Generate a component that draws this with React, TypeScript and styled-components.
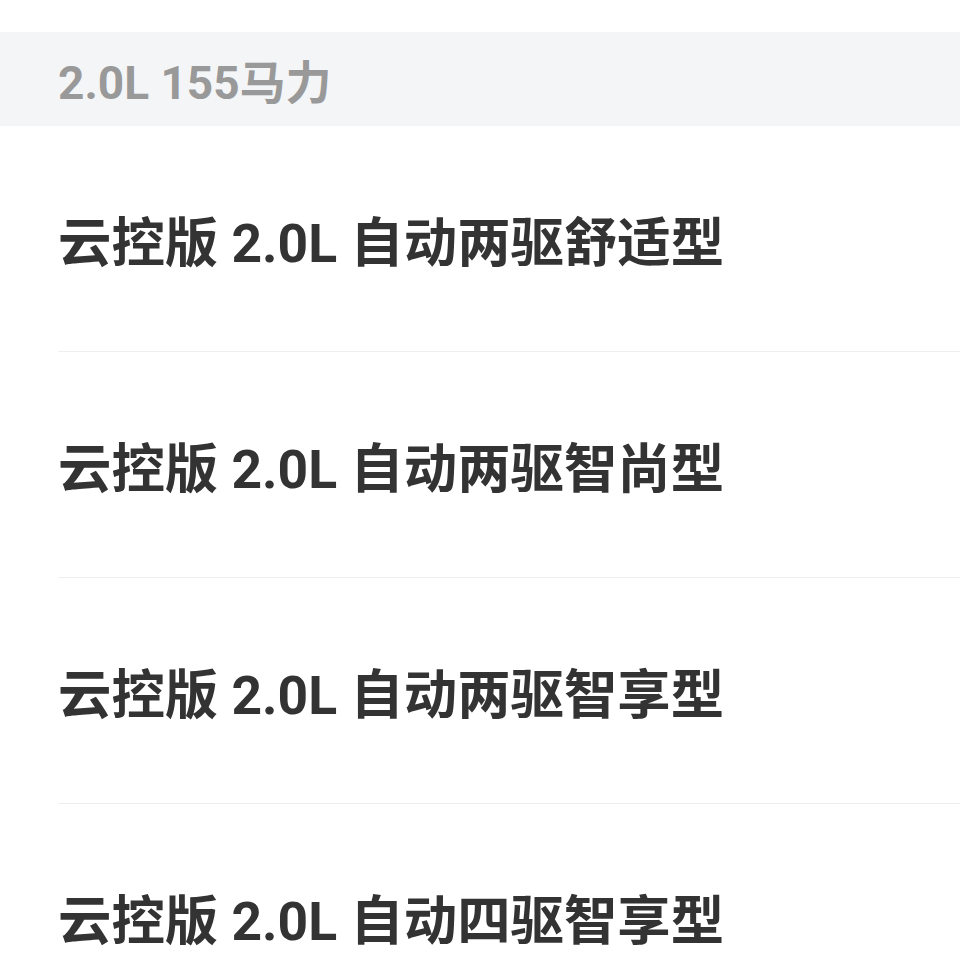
import React from "react";
import styled, { createGlobalStyle } from "styled-components";

const GlobalStyle = createGlobalStyle`
  html, body {
    margin: 0;
    padding: 0;
    background: #ffffff;
  }
  body {
    font-family: Roboto, "Noto Sans CJK SC", sans-serif;
  }
`;

const Page = styled.div`
  width: 960px;
  padding-top: 32px;
  background: #ffffff;
`;

const GroupHeader = styled.div`
  height: 94px;
  display: flex;
  align-items: center;
  padding-left: 58px;
  background: #f4f5f7;
  color: #999999;
  font-size: 46px;
  font-weight: 700;
`;

const List = styled.div`
  display: flex;
  flex-direction: column;
  padding-left: 58px;
`;

const Row = styled.div`
  height: 225px;
  display: flex;
  align-items: center;
  border-bottom: 1px solid #eeeeee;
  color: #333333;
  font-size: 53.4px;
  font-weight: 700;
  white-space: nowrap;
`;

const items = [
  "云控版 2.0L 自动两驱舒适型",
  "云控版 2.0L 自动两驱智尚型",
  "云控版 2.0L 自动两驱智享型",
  "云控版 2.0L 自动四驱智享型",
];

export default function App() {
  return (
    <>
      <GlobalStyle />
      <Page>
        <GroupHeader>2.0L 155马力</GroupHeader>
        <List>
          {items.map((t) => (
            <Row key={t}>{t}</Row>
          ))}
        </List>
      </Page>
    </>
  );
}
